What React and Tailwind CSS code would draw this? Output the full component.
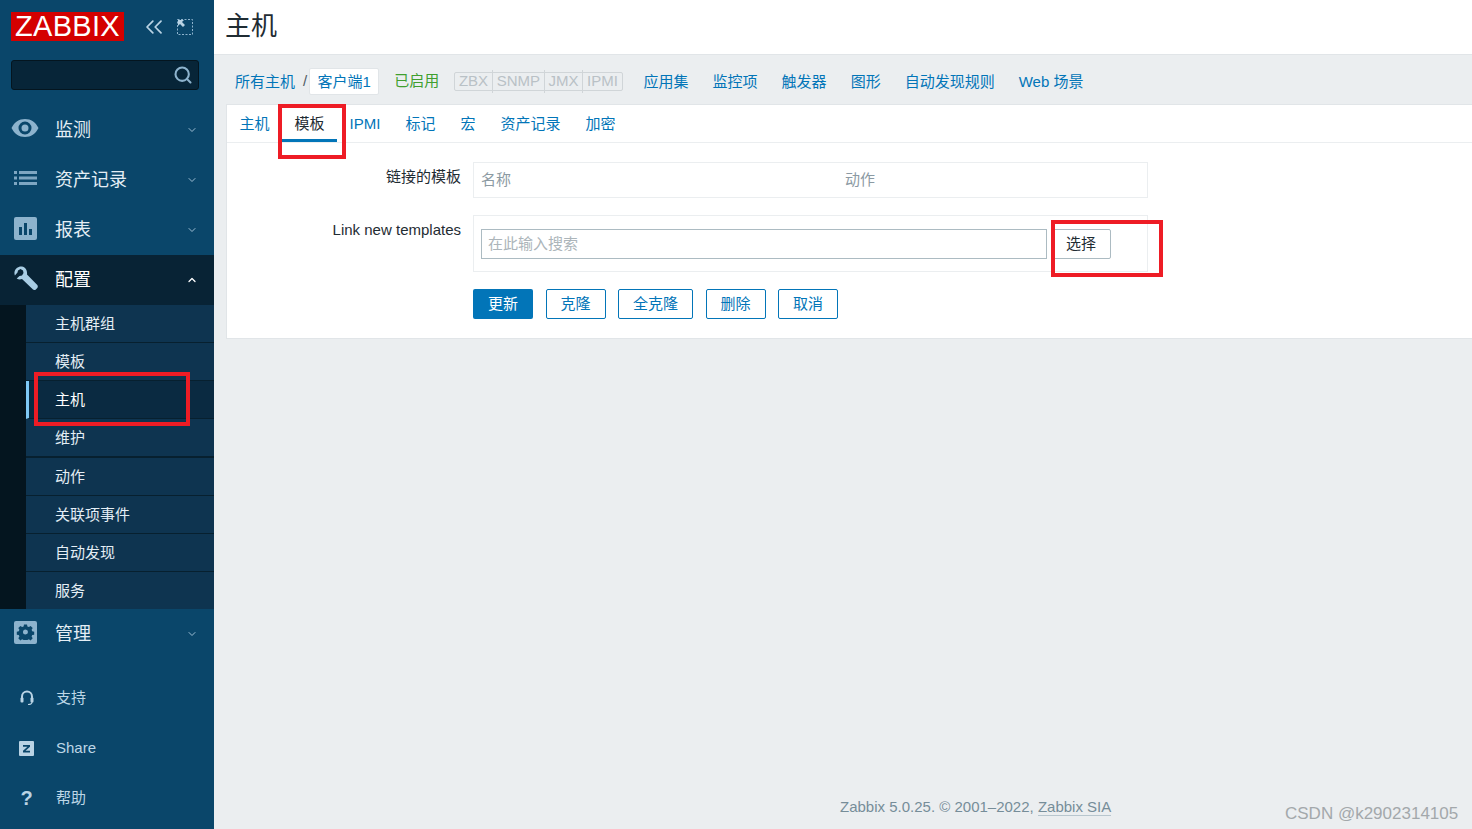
import React from 'react';
import { ChevronDown, ChevronUp, ChevronsLeft, Search } from 'lucide-react';

const FONT = 'font-["Liberation_Sans","Noto_Sans_CJK_SC",sans-serif]';

const EyeIcon = () => (
  <svg width="28" height="20" viewBox="0 0 28 20" className="-ml-[3px] -mt-[4px]">
    <path fillRule="evenodd" fill="#8db3cd" d="M0.5 10C3.5 4 8 1 14 1s10.500 3 13.500 9C24.500 16 20 19 14 19S3.500 16 0.500 10zM14 3.500a6.500 6.500 0 1 0 0 13 6.500 6.500 0 0 0 0-13zM14 6.500a3.500 3.500 0 1 1 0 7 3.500 3.500 0 0 1 0-7z" />
  </svg>
);

const ListIcon = () => (
  <svg width="24" height="14" viewBox="0 0 24 14" fill="#7ea6c2" className="-mt-[4px]">
    <rect x="0" y="0" width="3" height="3" />
    <rect x="0" y="5.500" width="3" height="3" />
    <rect x="0" y="11" width="3" height="3" />
    <rect x="5" y="0" width="18" height="3" />
    <rect x="5" y="5.500" width="18" height="3" />
    <rect x="5" y="11" width="18" height="3" />
  </svg>
);

const ChartIcon = () => (
  <svg width="23" height="23" viewBox="0 0 23 23" className="-mt-[4px]">
    <rect width="23" height="23" rx="2" fill="#8db3cd" />
    <rect x="5" y="10" width="3" height="8" fill="#0a466a" />
    <rect x="10" y="6" width="3" height="12" fill="#0a466a" />
    <rect x="15" y="12" width="3" height="6" fill="#0a466a" />
  </svg>
);

const WrenchIcon = () => (
  <svg width="24" height="24" viewBox="0 0 24 24" className="-mt-[4px]">
    <path fill="#a9cde4" d="M8 0.500C4.500 0 1 2.500 0.500 6c-.2 1.200 0 2.400.4 3.400L3.500 6.500 4 4.500 6.500 3 9 4.500 9.500 7 8 9.500 5.500 10l-2.800 2.500c1.500 1 3.500 1.200 5.300.5L19 23.500c.8.700 2 .7 2.800-.1l1.500-1.500c.7-.8.700-2 0-2.800L13 8.500C13.500 4.500 11.500 1 8 .500z" />
  </svg>
);

const GearIcon = () => (
  <svg width="23" height="23" viewBox="0 0 23 23" className="-mt-[3px]">
    <rect width="23" height="23" rx="2" fill="#8db3cd" />
    <path fillRule="evenodd" fill="#0a466a" d="M10 4h3l.4 2 1.500.6 1.700-1.100 2.100 2.100-1.100 1.700.6 1.500 2 .4v3l-2 .4-.6 1.500 1.100 1.700-2.100 2.100-1.700-1.100-1.500.6-.4 0h-3l-.4 0-1.500-.6-1.700 1.100-2.100-2.100 1.100-1.700-.6-1.500-2-.4v-3l2-.4.6-1.500-1.100-1.700 2.100-2.100 1.700 1.100 1.500-.6zM11.500 9a2.500 2.500 0 1 0 0 5 2.500 2.500 0 0 0 0-5z" transform="translate(0 -.5)" />
  </svg>
);

const HeadsetIcon = () => (
  <svg width="14" height="16" viewBox="0 0 14 16" fill="none">
    <path d="M2 9V6.500a5 5 0 0 1 10 0V9" stroke="#b9d3e4" strokeWidth="2" />
    <rect x="0.500" y="7.500" width="3" height="5" rx="1" fill="#b9d3e4" />
    <rect x="10.500" y="7.500" width="3" height="5" rx="1" fill="#b9d3e4" />
    <path d="M12 12c0 2-1.500 2.500-4 2.500" stroke="#b9d3e4" strokeWidth="1.200" />
  </svg>
);

const ShareIcon = () => (
  <svg width="15" height="15" viewBox="0 0 15 15">
    <rect width="15" height="15" rx="1" fill="#b9d3e4" />
    <path d="M4 4h7v1.700L6.500 9.700H11V11.500H4V9.800L8.500 5.800H4z" fill="#0a466a" />
  </svg>
);

const topMenu = [
  { label: '监测', icon: <EyeIcon /> },
  { label: '资产记录', icon: <ListIcon /> },
  { label: '报表', icon: <ChartIcon /> },
];

const subMenu = ['主机群组', '模板', '主机', '维护', '动作', '关联项事件', '自动发现', '服务'];
const hostLinks = ['应用集', '监控项', '触发器', '图形', '自动发现规则', 'Web 场景'];
const tabs = ['主机', '模板', 'IPMI', '标记', '宏', '资产记录', '加密'];
const pills = ['ZBX', 'SNMP', 'JMX', 'IPMI'];
const actions = ['克隆', '全克隆', '删除', '取消'];

const MenuRow = ({ label, icon, open }) => (
  <div className={`flex h-[50px] items-center pl-[14px] pr-[16px] ${open ? 'bg-[#082335] text-white' : 'text-[#e4eef5]'}`}>
    <span className="flex w-[41px] shrink-0 items-center">{icon}</span>
    <span className="flex-1 text-[18px]">{label}</span>
    {open ? <ChevronUp size={12} strokeWidth={2.500} color="#ffffff" /> : <ChevronDown size={12} strokeWidth={2} color="#9dbdd3" />}
  </div>
);

const FooterLink = ({ label, icon }) => (
  <div className="flex h-[50px] items-center text-[15px] text-[#bdd6e6]">
    <span className="flex w-[56px] shrink-0 justify-center pr-[3px]">{icon}</span>
    <span>{label}</span>
  </div>
);

const subRowClass = (name) => {
  if (name === '主机') return 'h-[38px] border-b border-l-[3px] border-l-[#7ec8f5] bg-[#0a2a41] pl-[26px] text-white';
  if (name === '维护') return 'h-[39px] border-b-2 bg-[#0e3450] pl-[29px] text-[#e4eef5]';
  if (name === '服务') return 'h-[37px] bg-[#0e3450] pl-[29px] text-[#e4eef5]';
  return 'h-[38px] border-b bg-[#0e3450] pl-[29px] text-[#e4eef5]';
};

const Sidebar = () => (
  <aside className="flex w-[214px] shrink-0 flex-col bg-[#0a466a]">
    <div className="flex h-[60px] items-start pl-[11px] pt-[12px]">
      <div className="flex h-[29px] w-[113px] items-center justify-center bg-[#d40000] text-[29px] leading-none tracking-[0.3px] text-white">ZABBIX</div>
      <ChevronsLeft size={28} strokeWidth={1.500} color="#b9d3e4" className="ml-[16px] mt-[1px]" />
      <svg width="16" height="16" viewBox="0 0 16 16" fill="none" className="ml-[9px] mt-[7px]">
        <rect x="0.500" y="0.500" width="15" height="15" stroke="#8db3cd" strokeDasharray="2 1.500" />
        <path d="M1 1h6L5 3l3 3-2 2-3-3-2 2z" fill="#b9d3e4" />
      </svg>
    </div>
    <div className="ml-[11px] flex h-[30px] w-[188px] items-center justify-end rounded-[3px] border border-[#04151f] bg-[#072538] pr-[5px]">
      <Search size={20} strokeWidth={2.500} color="#8db3cd" />
    </div>
    <nav className="mt-[15px]">
      {topMenu.map((item) => (
        <MenuRow key={item.label} label={item.label} icon={item.icon} />
      ))}
      <MenuRow label="配置" icon={<WrenchIcon />} open />
      <div className="bg-[#04151f] pl-[26px]">
        {subMenu.map((name) => (
          <div key={name} className={`flex items-center border-[#07202f] pt-px text-[15px] ${subRowClass(name)}`}>
            {name}
          </div>
        ))}
      </div>
      <MenuRow label="管理" icon={<GearIcon />} />
    </nav>
    <div className="mt-[14px]">
      <FooterLink label="支持" icon={<HeadsetIcon />} />
      <FooterLink label="Share" icon={<ShareIcon />} />
      <FooterLink label="帮助" icon={<span className="text-[20px] font-bold leading-none text-[#b9d3e4]">?</span>} />
    </div>
  </aside>
);

const HostNav = () => (
  <div className="flex h-[49px] items-center pl-[21px] pt-[4px] text-[15px] text-[#0275b8]">
    <span className="pt-px">所有主机</span>
    <span className="ml-[8px] mr-[2px] text-[#4f5c64]">/</span>
    <span className="flex h-[27px] w-[70px] items-center justify-center rounded-[2px] border border-[#e1e5e8] bg-white pt-px">客户端1</span>
    <span className="ml-[15px] text-[#3f9f2f]">已启用</span>
    <div className="ml-[15px] flex h-[19px] items-center rounded-[2px] border border-[#d0d5d8] text-[#b9c1c6]">
      {pills.map((p, i) => (
        <span key={p} className={`px-[3.75px] ${i > 0 ? 'border-l border-[#d0d5d8]' : ''}`}>{p}</span>
      ))}
    </div>
    <div className="ml-[21px] flex gap-[24px] pt-px">
      {hostLinks.map((l) => (
        <span key={l}>{l}</span>
      ))}
    </div>
  </div>
);

const TemplateForm = () => (
  <div className="ml-[12px] border-y border-l border-[#e1e5e8] bg-white">
    <div className="flex h-[38px] border-b border-[#ebeef0] text-[15px] text-[#0275b8]">
      {tabs.map((t) => (
        <div
          key={t}
          className={`flex items-center border-b-[3px] px-[12.5px] pt-[4px] ${t === '模板' ? 'border-[#0275b8] text-[#1f2c33]' : 'border-transparent'}`}
        >
          {t}
        </div>
      ))}
    </div>
    <div className="pt-[19px] pb-[19px] text-[15px]">
      <div className="flex">
        <div className="w-[234px] pt-[4px] text-right text-[#1f2c33]">链接的模板</div>
        <div className="ml-[12px] flex h-[36px] w-[675px] items-center border border-[#ebeef0] pl-[7px] text-[#8c9aa3]">
          <span className="w-[364px]">名称</span>
          <span>动作</span>
        </div>
      </div>
      <div className="mt-[17px] flex">
        <div className="w-[234px] pt-[4px] text-right text-[#1f2c33]">Link new templates</div>
        <div className="ml-[12px] flex h-[57px] w-[675px] items-center border border-[#ebeef0] pl-[7px]">
          <div className="flex h-[30px] w-[566px] items-center border border-[#acbbc2] pl-[6px] pt-px text-[#acb5ba]">在此输入搜索</div>
          <button className="ml-[4px] h-[30px] w-[60px] rounded-[2px] border border-[#acbbc2] pt-px text-[#1f2c33]">选择</button>
        </div>
      </div>
      <div className="ml-[246px] mt-[17px] flex gap-[12.500px]">
        <button className="h-[30px] w-[60px] rounded-[2px] bg-[#0275b8] pt-px text-white">更新</button>
        {actions.map((a) => (
          <button key={a} className={`h-[30px] rounded-[2px] border border-[#0275b8] pt-px text-[#0275b8] ${a === '全克隆' ? 'w-[75px]' : 'w-[60px]'}`}>
            {a}
          </button>
        ))}
      </div>
    </div>
  </div>
);

const App = () => (
  <div className={`relative flex h-[829px] w-[1472px] overflow-hidden bg-[#ebeef0] ${FONT}`}>
    <Sidebar />
    <main className="flex min-w-0 flex-1 flex-col">
      <header className="flex h-[55px] shrink-0 items-center border-b border-[#e1e5e8] bg-white pb-[1px] pl-[11px] text-[26px] text-[#1f2c33]">主机</header>
      <HostNav />
      <TemplateForm />
      <footer className="mt-auto pb-[11px] pl-[626px] text-[15px] text-[#768d99]">
        Zabbix 5.0.25. © 2001–2022, <span className="border-b border-[#b8c6ce]">Zabbix SIA</span>
      </footer>
    </main>

    {/* annotations drawn on top of the screenshot */}
    <div className="absolute left-[278px] top-[104px] h-[55px] w-[68px] border-[4px] border-[#ee1c25]" />
    <div className="absolute left-[34px] top-[372px] h-[54px] w-[156px] border-[4px] border-[#ee1c25]" />
    <div className="absolute left-[1051px] top-[220px] h-[57px] w-[112px] border-[4px] border-[#ee1c25]" />
    <div className="absolute left-[1285px] top-[801px] text-[17px] text-[#a3a8ab]">CSDN @k2902314105</div>
  </div>
);

export default App;
